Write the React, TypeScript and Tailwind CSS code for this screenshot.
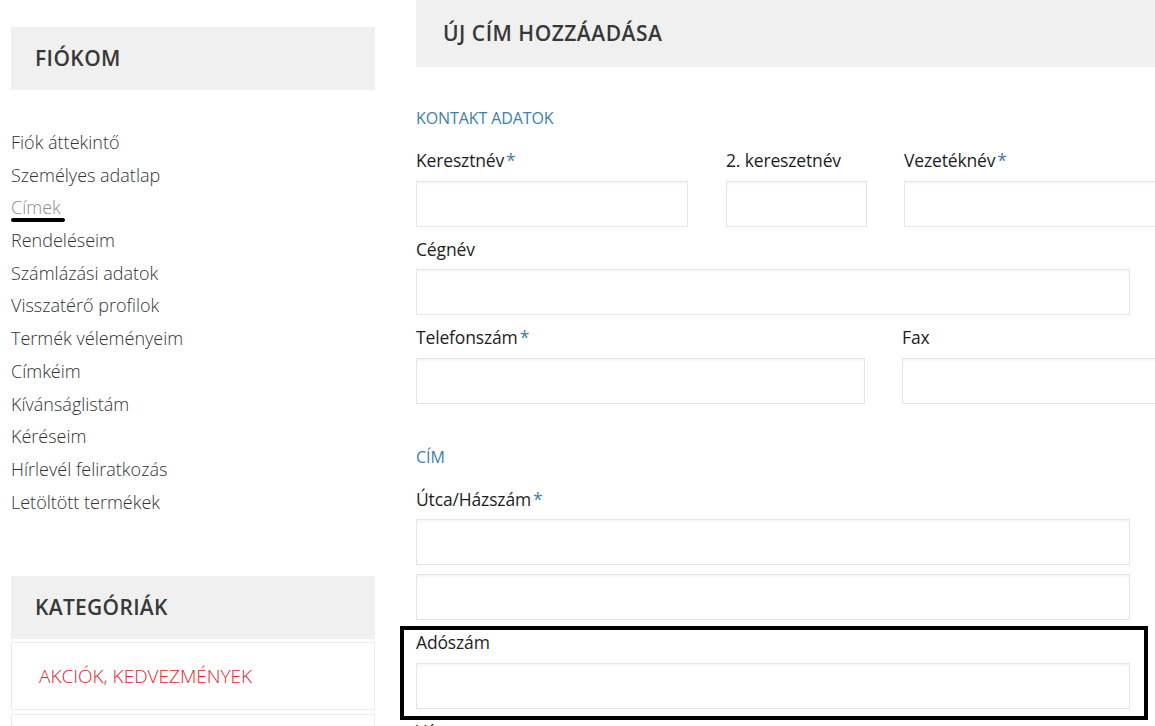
import React from "react";

const menu = [
  "Fiók áttekintő",
  "Személyes adatlap",
  "Címek",
  "Rendeléseim",
  "Számlázási adatok",
  "Visszatérő profilok",
  "Termék véleményeim",
  "Címkéim",
  "Kívánságlistám",
  "Kéréseim",
  "Hírlevél feliratkozás",
  "Letöltött termékek",
];

function Star() {
  return <span className="text-[#3d7fab] ml-[2px]">*</span>;
}

function Label({ children }: { children: React.ReactNode }) {
  return (
    <div className="h-[20px] leading-[20px] mb-[10.5px] text-[17.5px] text-[#1e1e1e] whitespace-nowrap tracking-[-0.15px]">
      {children}
    </div>
  );
}

function Input({ w }: { w: number | string }) {
  return (
    <div
      className="h-[46px] border border-[#e6e6e6] bg-white shadow-[inset_0_2px_2px_rgba(0,0,0,0.04)] shrink-0"
      style={{ width: w }}
    />
  );
}

export default function App() {
  return (
    <div
      className="w-[1155px] h-[726px] overflow-hidden bg-white flex"
      style={{ fontFamily: '"Open Sans", "Noto Sans", sans-serif' }}
    >
      {/* Left column */}
      <div className="w-[416px] shrink-0 pl-[11px] pt-[27px]">
        <div className="w-[364px] h-[63px] bg-[#f0f0f0] flex items-center pl-[24px]">
          <span className="text-[21px] font-semibold text-[#383838] tracking-[0.4px]">FIÓKOM</span>
        </div>
        <ul className="mt-[36px]">
          {menu.map((m) => (
            <li
              key={m}
              className={
                "h-[32.7px] leading-[32.7px] text-[18px] font-light whitespace-nowrap " +
                (m === "Címek" ? "text-[#8c8c8c]" : "text-[#333333]")
              }
            >
              {m === "Címek" ? (
                <span className="relative inline-block">
                  Címek
                  <span className="absolute left-0 top-[27px] w-[54px] h-[4px] rounded-full bg-black" />
                </span>
              ) : (
                m
              )}
            </li>
          ))}
        </ul>
        <div className="mt-[58px] w-[364px] h-[63px] bg-[#f0f0f0] flex items-center pl-[24px]">
          <span className="text-[21px] font-semibold text-[#383838] tracking-[0.3px]">KATEGÓRIÁK</span>
        </div>
        <div className="mt-[3px] w-[364px] h-[68px] border border-[#ececec] flex items-center pl-[27px]">
          <span className="text-[19px] text-[#e1242f] font-light">AKCIÓK, KEDVEZMÉNYEK</span>
        </div>
        <div className="mt-[4px] w-[364px] h-[68px] border border-[#ececec]" />
      </div>

      {/* Right column */}
      <div className="relative w-[760px] shrink-0">
        <div className="h-[67px] bg-[#f0f0f0] flex items-center pl-[27px]">
          <span className="text-[21px] font-semibold text-[#383838] tracking-[0.5px]">ÚJ CÍM HOZZÁADÁSA</span>
        </div>

        <div className="mt-[41px] h-[20px] leading-[20px] text-[16px] text-[#3d7fab] tracking-[-0.1px]">KONTAKT ADATOK</div>

        <div className="mt-[22px] flex">
          <div className="w-[310px] shrink-0">
            <Label>
              Keresztnév<Star />
            </Label>
            <Input w={272} />
          </div>
          <div className="w-[178px] shrink-0">
            <Label>2. kereszetnév</Label>
            <Input w={141} />
          </div>
          <div className="shrink-0">
            <Label>
              Vezetéknév<Star />
            </Label>
            <Input w={270} />
          </div>
        </div>

        <div className="mt-[12px]">
          <Label>Cégnév</Label>
          <Input w={714} />
        </div>

        <div className="mt-[12px] flex">
          <div className="w-[486px] shrink-0">
            <Label>
              Telefonszám<Star />
            </Label>
            <Input w={449} />
          </div>
          <div className="shrink-0">
            <Label>Fax</Label>
            <Input w={270} />
          </div>
        </div>

        <div className="mt-[43px] h-[20px] leading-[20px] text-[16px] text-[#3d7fab]">CÍM</div>

        <div className="mt-[22px]">
          <Label>
            Útca/Házszám<Star />
          </Label>
          <Input w={714} />
          <div className="h-[9px]" />
          <Input w={714} />
        </div>

        <div className="mt-[12px]">
          <Label>Adószám</Label>
          <Input w={714} />
        </div>

        <div className="mt-[12px]">
          <Label>Város</Label>
          <Input w={714} />
        </div>

        <div className="absolute left-[-16px] top-[626px] w-[748px] h-[94px] border-[4px] border-black" />
      </div>
    </div>
  );
}
